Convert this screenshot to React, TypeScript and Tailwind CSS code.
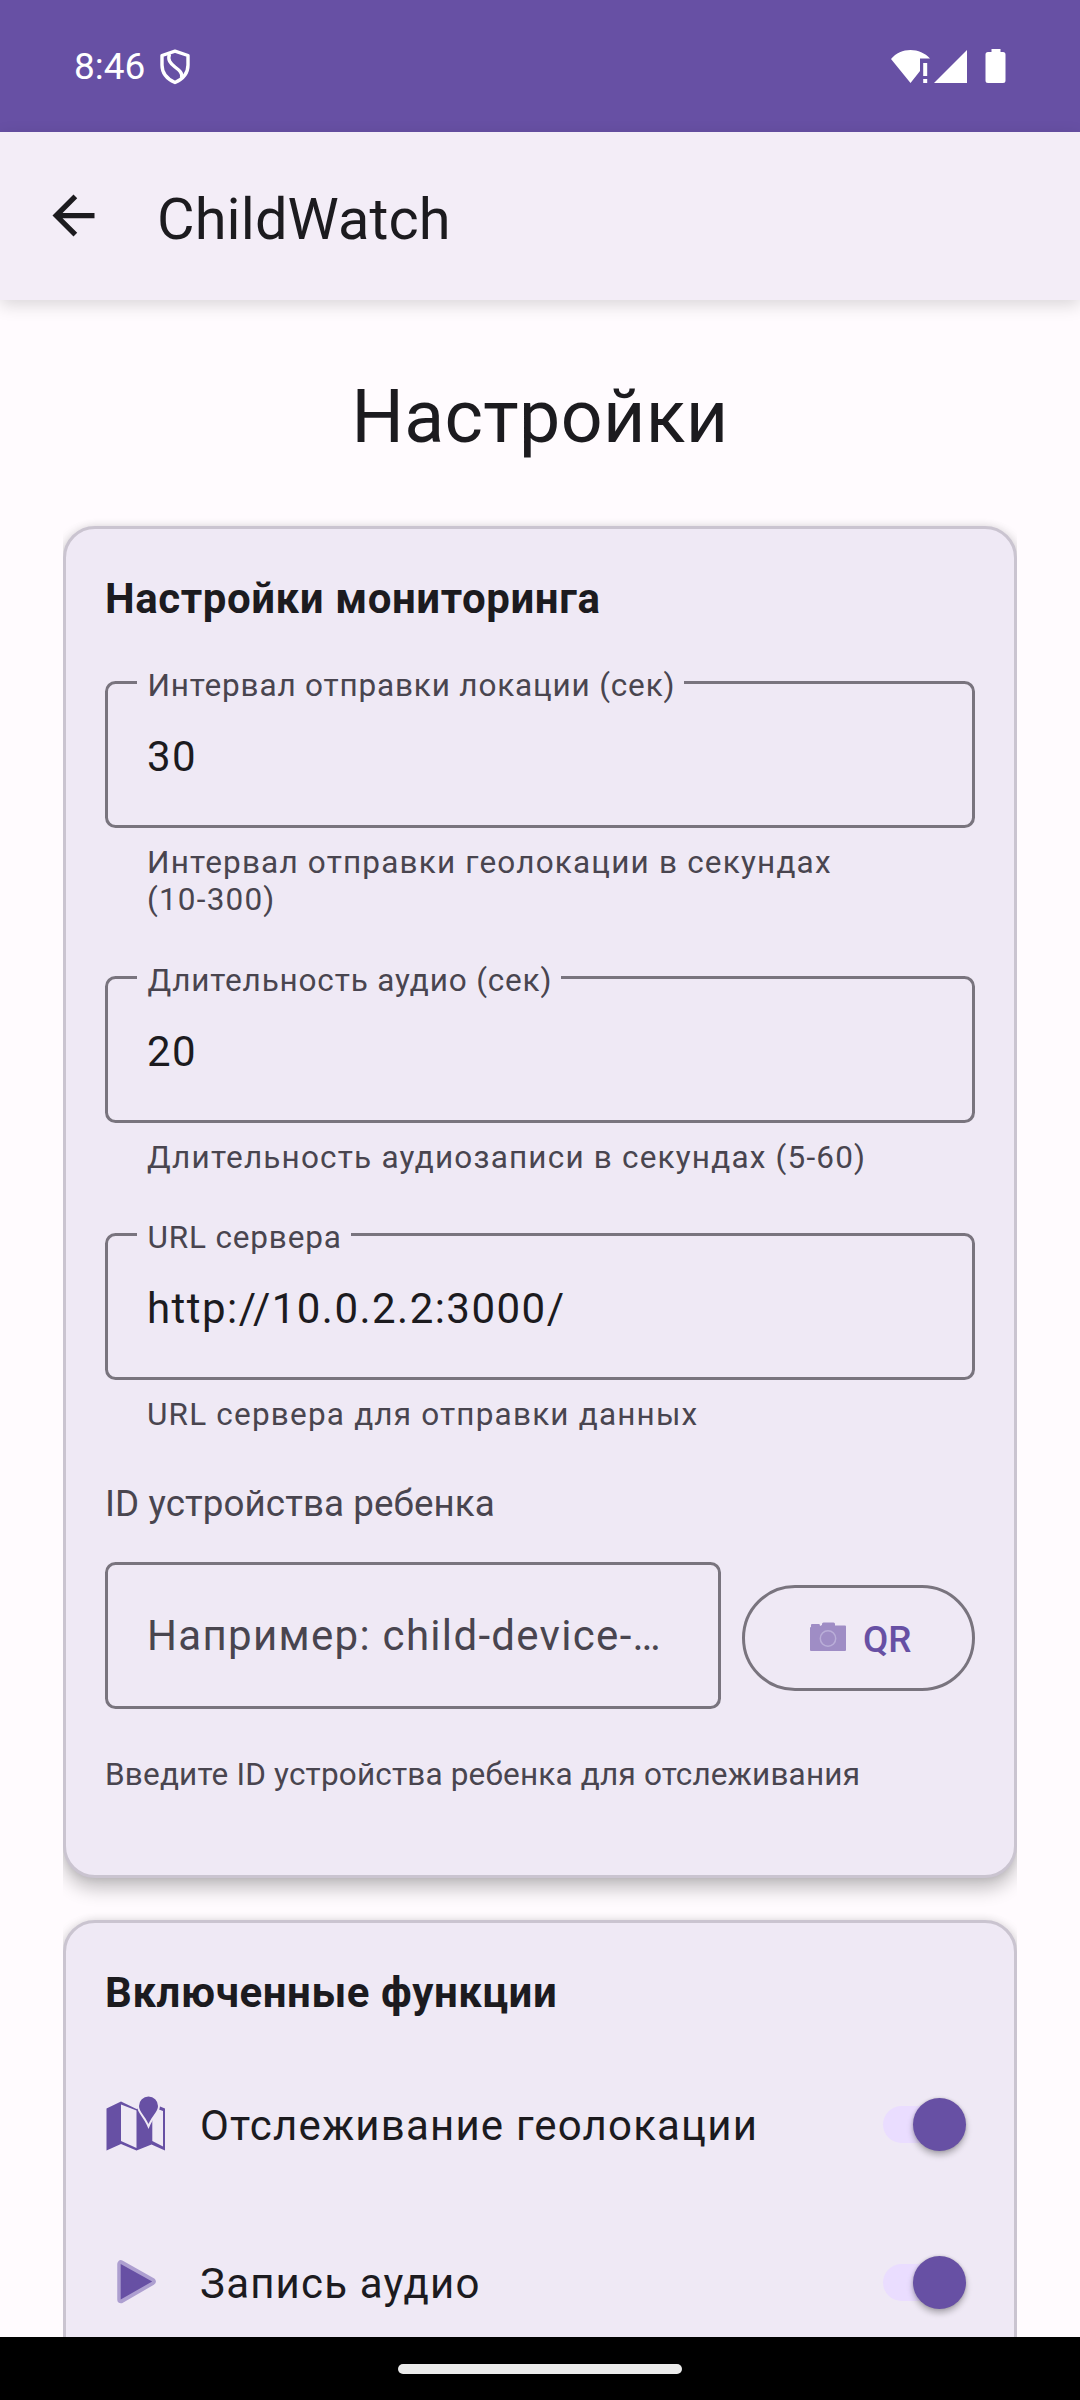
import type { ReactNode } from "react";

function StatusBar() {
  return (
    <div className="flex h-[132px] shrink-0 items-center bg-[#6750a4] pr-[74px] pl-[74px] text-white">
      <span className="mt-[2px] text-[37px] leading-[44px]">8:46</span>
      <svg className="mt-[2px] ml-[14px] h-[36px] w-[32px]" viewBox="0 0 32 36" fill="none" stroke="currentColor" strokeWidth="3.4" strokeLinejoin="round">
        <path d="M16 2.200 29 6.500v9.500c0 8-5 14-13 17.500C8 30 3 24 3 16V6.500z" />
        <path d="M10.500 5C8.500 11 11 14 16 18 20 21 24 24 22.500 29" />
      </svg>
      <div className="ml-auto flex items-center">
        <svg className="h-[34px] w-[39px]" viewBox="0 0 39 34" fill="currentColor">
          <path d="M0 10C5 4 12 1 19.500 1S34 4 39 9.500H29V22l-9.500 12z" />
          <path d="M32.200 14h4v13h-4zM32.200 30h4v4h-4z" />
        </svg>
        <svg className="ml-[4px] h-[34px] w-[33px]" viewBox="0 0 33 34" fill="currentColor">
          <path d="M33 1v33H0z" />
        </svg>
        <svg className="ml-[18px] h-[34px] w-[21px]" viewBox="0 0 21 34" fill="currentColor">
          <path d="M6.500 0h9v3H18a2.500 2.500 0 0 1 2.500 2.500v26A2.500 2.500 0 0 1 18 34H3a2.500 2.500 0 0 1-2.500-2.500v-26A2.500 2.500 0 0 1 3 3h3.500z" />
        </svg>
      </div>
    </div>
  );
}

function AppBar() {
  return (
    <header className="relative flex h-[168px] shrink-0 items-center bg-[#f3edf7] pl-[42px] shadow-[0_5px_16px_rgba(0,0,0,0.15)]">
      <svg className="-mt-[1px] h-[63px] w-[63px]" viewBox="0 0 24 24" fill="#1c1b1f">
        <path d="M20 11H7.830l5.590-5.590L12 4l-8 8 8 8 1.410-1.410L7.830 13H20v-2z" />
      </svg>
      <h1 className="mt-[5px] ml-[52px] text-[57.75px] leading-[68px] tracking-[0.1px]">ChildWatch</h1>
    </header>
  );
}

function Card({ title, className, children }: { title: string; className: string; children: ReactNode }) {
  return (
    <div className="-mt-[20px] overflow-hidden pt-[20px] pb-[42px]">
      <section
        className={
          "rounded-[32px] border-[3px] border-[#cac4d0] bg-[#efe9f5] px-[39px] pt-[39px] shadow-[0_11px_18px_rgba(0,0,0,0.23),0_0_8px_rgba(0,0,0,0.12)] " +
          className
        }
      >
        <h3 className="pt-[6px] text-[42px] leading-[49px] font-bold tracking-[0.58px]">{title}</h3>
        {children}
      </section>
    </div>
  );
}

function Field({ label, value, helper }: { label: string; value: string; helper: ReactNode }) {
  return (
    <div>
      <div className="relative flex h-[147px] items-center rounded-[10.500px] border-[3px] border-[#79747e] pl-[39px]">
        <span className="absolute top-[-17px] left-[29px] bg-[#efe9f5] pr-[9px] pl-[10.500px] text-[31.500px] leading-[37px] tracking-[0.83px] whitespace-nowrap text-[#49454f]">
          {label}
        </span>
        <span className="pt-[4px] text-[42px] leading-[50px] tracking-[1.470px]">{value}</span>
      </div>
      <p className="pt-[16px] pl-[42px] text-[31.500px] leading-[37px] tracking-[1.190px] text-[#49454f]">{helper}</p>
    </div>
  );
}

function FeatureRow({ icon, label }: { icon: ReactNode; label: string }) {
  return (
    <div className="flex h-[158px] items-center">
      <div className="flex w-[63px] justify-center">{icon}</div>
      <span className="ml-[32px] grow pt-[3px] text-[42px] leading-[50px] tracking-[1.190px]">{label}</span>
      <div className="flex h-[53px] items-center">
        <div className="h-[37px] w-[56px] rounded-l-full bg-[#eaddff]" />
        <div className="-ml-[26px] mr-[9px] h-[53px] w-[53px] rounded-full bg-[#6750a4] shadow-[0_4px_6px_rgba(0,0,0,0.28),0_0_3px_rgba(0,0,0,0.16)]" />
      </div>
    </div>
  );
}

function MapIcon() {
  return (
    <svg className="h-[63px] w-[63px] shrink-0" viewBox="0 0 63 63" fill="#6750a4">
      <path fillRule="evenodd" d="M1.500 15.500 16 8.500 31.500 16 46.500 10 60 15.500V57.500L46.500 51.500 31.500 57.500 16 51 1.500 57.500zM16 11.500V48l15.500 7V17.500zM47.300 14V48l10.700 5.500V18z" />
      <path
        d="M43.500 3.500a9.500 9.500 0 0 0-9.500 9.500C34 18.500 40 23 43.500 31 47 23 53 18.500 53 13a9.500 9.500 0 0 0-9.500-9.500z"
        stroke="#efe9f5"
        strokeWidth="4"
        paintOrder="stroke"
      />
    </svg>
  );
}

function PlayIcon() {
  return (
    <svg className="h-[63px] w-[63px] shrink-0" viewBox="0 0 63 63" fill="#6750a4">
      <path d="M16 13v35.500l31-18z" stroke="#ad9fd0" strokeWidth="7.500" strokeLinejoin="round" />
      <path d="M15.700 13v35.500l31.500-18z" />
    </svg>
  );
}

export default function App() {
  return (
    <div className="flex h-[2400px] w-[1080px] flex-col overflow-hidden bg-[#fffbfe] font-[Roboto,sans-serif] text-[#1c1b1f]">
      <StatusBar />
      <AppBar />
      <main className="min-h-0 grow overflow-hidden px-[63px] pt-[74px]">
        <h2 className="mb-[66px] text-center text-[73.500px] leading-[86px] tracking-[0.350px]">Настройки</h2>
        <Card title="Настройки мониторинга" className="h-[1352px]">
          <div className="mt-[18px] flex flex-col pt-[40px]">
            <Field
              label="Интервал отправки локации (сек)"
              value="30"
              helper={
                <>
                  Интервал отправки геолокации в секундах
                  <br />
                  (10-300)
                </>
              }
            />
            <div className="h-[58px]" />
            <Field label="Длительность аудио (сек)" value="20" helper="Длительность аудиозаписи в секундах (5-60)" />
            <div className="h-[57px]" />
            <Field label="URL сервера" value="http://10.0.2.2:3000/" helper="URL сервера для отправки данных" />
          </div>
          <p className="mt-[49px] text-[36.750px] leading-[43px] tracking-[0.080px] text-[#49454f]">ID устройства ребенка</p>
          <div className="mt-[37px] flex items-center justify-between">
            <div className="flex h-[147px] w-[616px] items-center rounded-[10.500px] border-[3px] border-[#79747e] pl-[39px]">
              <span className="text-[42px] leading-[50px] tracking-[0.03125em] text-[#49454f]">Например: child-device-…</span>
            </div>
            <div className="mt-[4px] flex h-[106px] w-[233px] items-center rounded-full border-[3px] border-[#79747e] pl-[65px]">
              <svg className="-mt-[2px] h-[30px] w-[36px]" viewBox="0 0 36 30">
                <path d="M1 3q0-1 1-1h7q1 0 1 2l2-1V2q0-1.500 1.500-1.500h10Q25 .5 25 2v1.500h10q1 0 1 1V28q0 1-1 1H1q-1 0-1-1V6q0-1 1-1z" fill="#9f8dc5" />
                <circle cx="18" cy="16.500" r="7.700" fill="none" stroke="#baaed8" strokeWidth="1.500" />
              </svg>
              <span className="ml-[17px] pt-[3px] text-[36.750px] leading-[43px] font-medium text-[#6750a4]">QR</span>
            </div>
          </div>
          <p className="mt-[47px] text-[31.500px] leading-[37px] tracking-[0.180px] text-[#49454f]">Введите ID устройства ребенка для отслеживания</p>
        </Card>
        <Card title="Включенные функции" className="h-[600px]">
          <div className="pt-[28px]">
            <FeatureRow icon={<MapIcon />} label="Отслеживание геолокации" />
            <FeatureRow icon={<PlayIcon />} label="Запись аудио" />
          </div>
        </Card>
      </main>
      <div className="relative flex h-[63px] shrink-0 items-center justify-center bg-black">
        <div className="h-[10px] w-[284px] rounded-full bg-[#ebebeb]" />
      </div>
    </div>
  );
}
